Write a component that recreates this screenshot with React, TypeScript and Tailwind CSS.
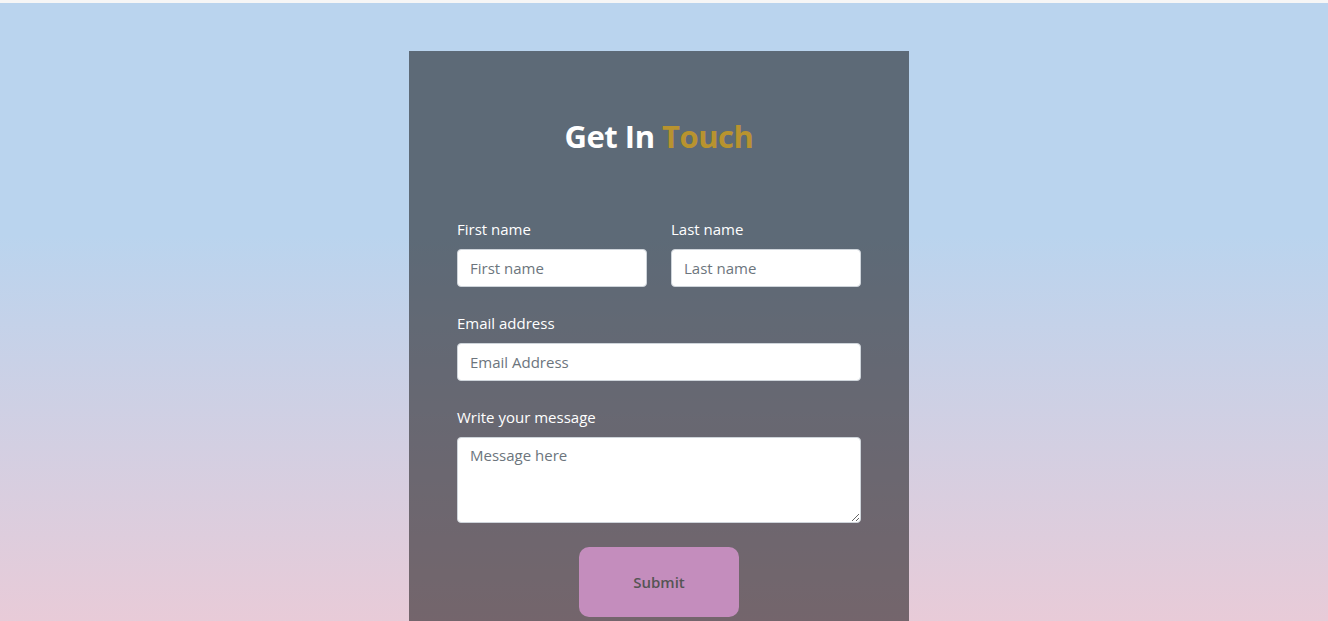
export default function App() {
    return (
        <div className="min-h-[621px] flex flex-col bg-[linear-gradient(180deg,#bad4ee_38%,#e8cbd8_100%)] font-['Open_Sans',sans-serif]">
            <div className="h-[3px] bg-[#f6f6f6]" />
            <div className="flex justify-center pt-[48px] pr-[10px]">
                <div className="w-[500px] h-[570px] bg-black/50 px-12 pt-[63px]">
                    <h1 className="text-center text-[31px] font-bold text-white leading-[44px] tracking-[-0.5px]">
                        Get In <span className="text-[#b8932f]">Touch</span>
                    </h1>
                    <form className="mt-[59px] flex flex-col text-[15px]">
                        <div className="grid grid-cols-2 gap-6">
                            <div className="flex flex-col">
                                <label className="text-white leading-[24px] mb-2">First name</label>
                                <input
                                    className="h-[38px] rounded bg-white border border-[#ced4da] px-3 text-[15px] placeholder:text-[#6c757d] outline-none"
                                    placeholder="First name"
                                />
                            </div>
                            <div className="flex flex-col">
                                <label className="text-white leading-[24px] mb-2">Last name</label>
                                <input
                                    className="h-[38px] rounded bg-white border border-[#ced4da] px-3 text-[15px] placeholder:text-[#6c757d] outline-none"
                                    placeholder="Last name"
                                />
                            </div>
                        </div>
                        <div className="flex flex-col mt-[24px]">
                            <label className="text-white leading-[24px] mb-2">Email address</label>
                            <input
                                className="h-[38px] rounded bg-white border border-[#ced4da] px-3 text-[15px] placeholder:text-[#6c757d] outline-none"
                                placeholder="Email Address"
                            />
                        </div>
                        <div className="flex flex-col mt-[24px]">
                            <label className="text-white leading-[24px] mb-2">Write your message</label>
                            <textarea
                                className="h-[86px] rounded bg-white border border-[#ced4da] px-3 py-[6px] text-[15px] placeholder:text-[#6c757d] outline-none"
                                placeholder="Message here"
                            />
                        </div>
                        <div className="flex justify-center mt-[24px]">
                            <button
                                type="button"
                                className="w-[160px] h-[70px] rounded-[10px] bg-[#c48dbd] text-[#555] font-semibold text-[15px]"
                            >
                                Submit
                            </button>
                        </div>
                    </form>
                </div>
            </div>
        </div>
    );
}
